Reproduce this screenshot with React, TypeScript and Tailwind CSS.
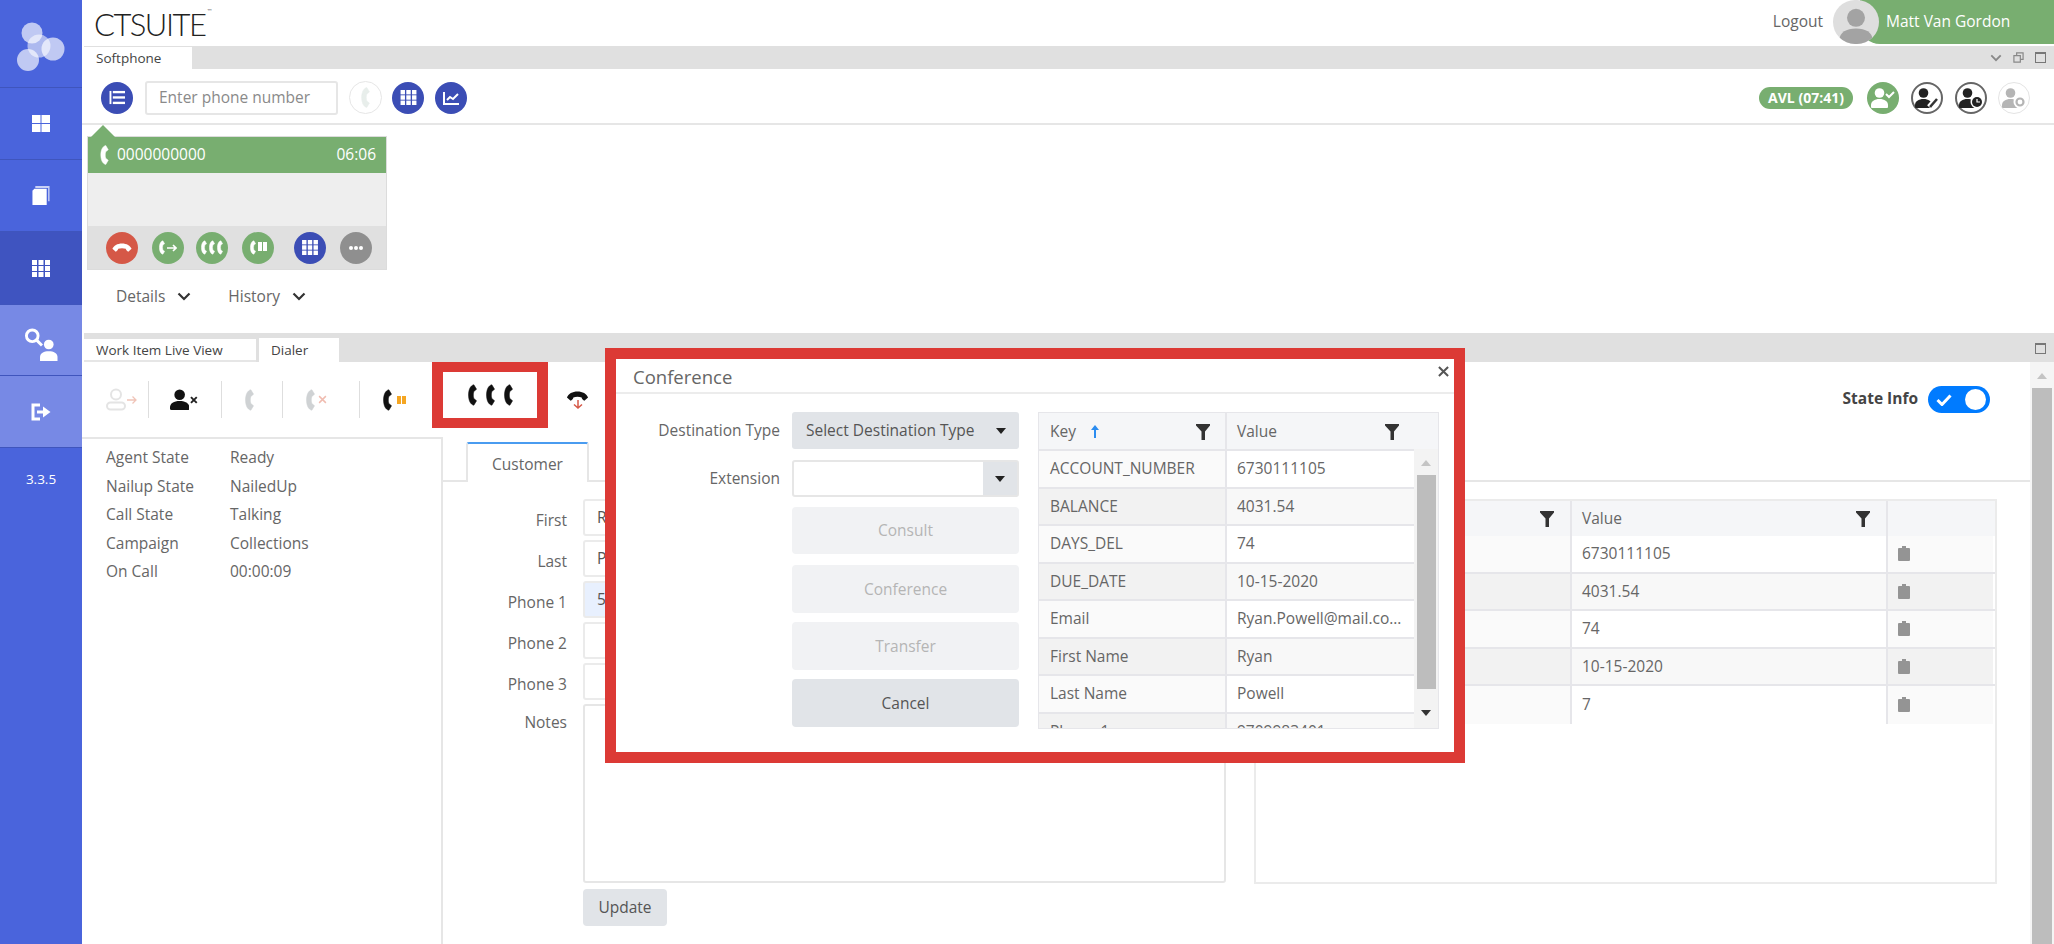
import type { ReactNode } from "react";

const Handset = ({ className = "" }: { className?: string }) => (
  <svg viewBox="0 0 10 24" className={className} fill="currentColor" stroke="currentColor" strokeWidth=".6" strokeLinejoin="round">
    <path d="M6.500.6l3 5-3 2.400c-.8 2.600-.8 5.400 0 8l3 2.400-3 5C2.500 22.500.6 17.500.6 12S2.500 1.500 6.500.6z" />
  </svg>
);

const Hangup = ({ className = "" }: { className?: string }) => (
  <svg viewBox="0 0 24 12" className={className} fill="currentColor">
    <path d="M.5 7C2 3 6.500.5 12 .5S22 3 23.500 7l-4 3.500c-1 0-3-2.500-3-3.500-2.500-1-6.500-1-9 0 0 1-2 3.500-3 3.500z" />
  </svg>
);

const UserGlyph = ({ className = "" }: { className?: string }) => (
  <svg viewBox="0 0 20 22" className={className} fill="currentColor">
    <circle cx="10" cy="6" r="5.500" />
    <path d="M1.500 22Q0 22 0 20.500V19c0-4 4-6.500 10-6.500S20 15 20 19v1.500q0 1.500-1.500 1.500z" />
  </svg>
);

const AgentIcon = ({ fill, children }: { fill: string; children: ReactNode }) => (
  <svg viewBox="0 0 24 20" className="h-[20px] w-[24px]" fill={fill}>
    <circle cx="8.500" cy="5" r="4.800" />
    <path d="M1 20Q0 20 0 19v-2c0-3.500 3.500-6 8.500-6s8.500 2.500 8.500 6v2q0 1-1 1z" />
    {children}
  </svg>
);

const Grid3 = ({ className = "" }: { className?: string }) => (
  <svg viewBox="0 0 18 17" className={className} fill="currentColor">
    {[0, 6, 12].map((y) =>
      [0, 6.500, 13].map((x) => <rect key={`${x}-${y}`} x={x} y={y} width="5" height="5" />)
    )}
  </svg>
);

const Funnel = () => (
  <svg viewBox="0 0 14 16" className="h-4 w-[14px] text-[#333]" fill="currentColor">
    <path d="M0 0h14v1.500L9 7.500V16H5.500V7.500L0 1.500z" />
  </svg>
);

const Arrow = ({ up = false, className = "" }: { up?: boolean; className?: string }) => (
  <svg viewBox="0 0 10 6" className={`h-[6px] w-[10px] ${className}`} fill="currentColor">
    <path d={up ? "M5 0l5 6H0z" : "M0 0h10L5 6z"} />
  </svg>
);

const Chevron = ({ className = "" }: { className?: string }) => (
  <svg viewBox="0 0 14 9" className={className} fill="none" stroke="currentColor" strokeWidth="2.200">
    <path d="M1.500 1.500L7 7l5.500-5.500" />
  </svg>
);

const Circle = ({ bg, children }: { bg: string; children: ReactNode }) => (
  <div className={`flex h-8 w-8 items-center justify-center rounded-full ${bg}`}>{children}</div>
);

const SideItem = ({ bg, h, children }: { bg: string; h: string; children: ReactNode }) => (
  <div className={`flex items-center justify-center border-b border-[#3f55bd] text-white ${bg} ${h}`}>{children}</div>
);

const Sep = ({ ml }: { ml: string }) => <div className={`h-[37px] w-px bg-[#dedede] ${ml}`} />;

const customerRows = [
  { label: "First", value: "Ryan", bg: "bg-white" },
  { label: "Last", value: "Powell", bg: "bg-white" },
  { label: "Phone 1", value: "55", bg: "bg-[#e8f0fe]" },
  { label: "Phone 2", value: "", bg: "bg-white" },
  { label: "Phone 3", value: "", bg: "bg-white" },
];

const attached = [
  ["ACCOUNT_NUMBER", "6730111105"],
  ["BALANCE", "4031.54"],
  ["DAYS_DEL", "74"],
  ["DUE_DATE", "10-15-2020"],
  ["Email", "Ryan.Powell@mail.com"],
  ["First Name", "Ryan"],
  ["Last Name", "Powell"],
  ["Phone 1", "9709983401"],
];

const callRows = [
  ["Agent State", "Ready"],
  ["Nailup State", "NailedUp"],
  ["Call State", "Talking"],
  ["Campaign", "Collections"],
  ["On Call", "00:00:09"],
];

function Sidebar() {
  return (
    <aside className="flex h-full w-[82px] shrink-0 flex-col bg-[#4a64dc]">
      <div className="flex h-[88px] items-center justify-center border-b border-[#3f55bd] pt-[6px]">
        <svg viewBox="0 0 50 50" className="h-[50px] w-[50px]" fill="#fff">
          <circle cx="16" cy="11" r="10.500" opacity=".65" />
          <circle cx="37" cy="27" r="11.500" opacity=".65" />
          <circle cx="12" cy="38" r="11" opacity=".65" />
          <circle cx="23" cy="24" r="11.500" opacity=".55" />
        </svg>
      </div>
      <SideItem bg="" h="h-[72px]">
        <svg viewBox="0 0 18 17" className="h-[17px] w-[18px]" fill="currentColor">
          <rect width="8.500" height="8" />
          <rect x="9.500" width="8.500" height="8" />
          <rect y="9" width="8.500" height="8" />
          <rect x="9.500" y="9" width="8.500" height="8" />
        </svg>
      </SideItem>
      <SideItem bg="" h="h-[72px]">
        <svg viewBox="0 0 20 20" className="h-[19px] w-[20px]" fill="currentColor">
          <path d="M3 3h13v17H1V5z" />
          <path d="M4 0h15v16h-1.500V2H4z" opacity=".7" />
        </svg>
      </SideItem>
      <SideItem bg="bg-[#3f54c0]" h="h-[73px]">
        <Grid3 className="h-[17px] w-[18px]" />
      </SideItem>
      <SideItem bg="bg-[#7789e5] pt-[8px]" h="h-[71px]">
        <svg viewBox="0 0 34 34" className="h-[33px] w-[34px]">
          <circle cx="8" cy="8" r="6" fill="none" stroke="#fff" strokeWidth="3" />
          <path d="M12 12l6 6" stroke="#fff" strokeWidth="3" />
          <circle cx="25" cy="17" r="5" fill="#fff" />
          <path d="M16 34v-4c0-4 4-6 9-6s9 2 9 6v4z" fill="#fff" />
        </svg>
      </SideItem>
      <SideItem bg="bg-[#7789e5]" h="h-[72px]">
        <svg viewBox="0 0 20 18" className="h-[18px] w-5" fill="none" stroke="#fff" strokeWidth="3">
          <path d="M9 2H2v14h7" />
          <path d="M6 9h7" />
          <path d="M12 3.500L19.500 9 12 14.500z" fill="#fff" stroke="none" />
        </svg>
      </SideItem>
      <div className="pt-[21px] text-center text-[13.500px] leading-5 text-white">3.3.5</div>
    </aside>
  );
}

function TopBar() {
  return (
    <header className="flex h-[46px] items-start bg-white">
      <div className="ml-[12px] flex items-start pt-[6px] [font-family:'Lato',sans-serif] text-[31px] leading-[36px] font-light tracking-[-1.500px] text-[#222]">
        CTSUITE
        <span className="ml-[2px] text-[6px] leading-[10px] tracking-normal">™</span>
      </div>
      <span className="ml-auto mt-[11px] text-[15.500px] leading-5 text-[#666]">Logout</span>
      <div className="relative z-10 ml-[10px] flex h-[44px] w-[46px] items-end justify-center overflow-hidden rounded-full bg-[#dedede] text-[#a3a3a3]">
        <UserGlyph className="h-[36px] w-[34px]" />
      </div>
      <div className="-ml-[19px] flex h-[44px] w-[194px] items-center rounded-bl-[20px] bg-[#78ae70] pl-[26px] text-[15.500px] text-white">
        Matt Van Gordon
      </div>
    </header>
  );
}

function Softphone() {
  return (
    <section className="flex h-[286px] flex-col">
      <div className="ml-[2px] flex h-[23px] items-end bg-[#e0e0e0] pr-[8px]">
        <div className="flex h-[22px] w-[108px] items-center bg-white pl-[12px] pt-[1px] text-[13.500px] text-[#444]">Softphone</div>
        <div className="ml-auto flex h-full items-center gap-[11px] text-[#888]">
          <Chevron className="h-[8px] w-[12px]" />
          <svg viewBox="0 0 12 12" className="h-[11px] w-[11px]" fill="none" stroke="currentColor" strokeWidth="1.300">
            <path d="M1 4h7v7H1zM4 4V1h7v7H8" />
          </svg>
          <div className="h-[11px] w-[11px] border border-t-2 border-[#777]" />
        </div>
      </div>
      <div className="flex h-[56px] items-center border-b-2 border-[#e6e6e6] pl-[19px] pr-[24px] pt-[3px]">
        <Circle bg="bg-[#3b4db5]">
          <svg viewBox="0 0 17 16" className="h-[15px] w-[17px]" fill="#fff">
            <rect y="1" width="2" height="14" />
            <rect x="3.500" y="1" width="13" height="2.500" />
            <rect x="3.500" y="6.700" width="13" height="2.500" />
            <rect x="3.500" y="12.500" width="13" height="2.500" />
          </svg>
        </Circle>
        <div className="ml-[12px] flex h-[34px] w-[193px] items-center rounded-[3px] border-2 border-[#e6e6e6] pl-[12px] text-[15.500px] text-[#8a8a8a]">
          Enter phone number
        </div>
        <div className="ml-[11px] flex h-[33px] w-[33px] items-center justify-center rounded-full border border-[#e6e6e6] text-[#e8eeeb]">
          <Handset className="h-[21px] w-[9px]" />
        </div>
        <div className="ml-[10px]">
          <Circle bg="bg-[#3b4db5]"><Grid3 className="h-[15px] w-[17px] text-white" /></Circle>
        </div>
        <div className="ml-[11px]">
          <Circle bg="bg-[#3b4db5]">
            <svg viewBox="0 0 17 14" className="h-[14px] w-[17px]" fill="none" stroke="#fff" strokeWidth="2">
              <path d="M1 1v12h15" />
              <path d="M4 9l3-3 3 2 5-5" />
            </svg>
          </Circle>
        </div>
        <div className="ml-auto flex h-[22px] w-[94px] items-center justify-center rounded-full bg-[#78ae70] text-[14px] font-bold text-white">
          AVL (07:41)
        </div>
        <div className="ml-[14px]">
          <Circle bg="bg-[#78ae70]">
            <AgentIcon fill="#fff">
              <path d="M15 6l3 3 5-5" fill="none" stroke="#fff" strokeWidth="2" />
            </AgentIcon>
          </Circle>
        </div>
        <div className="ml-[12px]">
          <Circle bg="border-2 border-[#666] bg-white">
            <AgentIcon fill="#222">
              <path d="M14 19l8-9" fill="none" stroke="#fff" strokeWidth="5" />
              <path d="M15 19l7-8" fill="none" stroke="#333" strokeWidth="2.500" />
            </AgentIcon>
          </Circle>
        </div>
        <div className="ml-[12px]">
          <Circle bg="border-2 border-[#666] bg-white">
            <AgentIcon fill="#222">
              <circle cx="18" cy="14" r="6.500" fill="#fff" />
              <circle cx="18" cy="14" r="5" fill="#222" />
              <path d="M18 11v3h3" fill="none" stroke="#fff" strokeWidth="1.200" />
            </AgentIcon>
          </Circle>
        </div>
        <div className="ml-[11px]">
          <Circle bg="border border-[#e4e4e4] bg-white">
            <AgentIcon fill="#b5b5b5">
              <circle cx="18" cy="14" r="6.500" fill="#fff" />
              <circle cx="18" cy="14" r="3.500" fill="none" stroke="#b5b5b5" strokeWidth="2.200" />
            </AgentIcon>
          </Circle>
        </div>
      </div>
      <CallCard />
      <div className="ml-[34px] mt-[16px] flex items-center text-[15.500px] leading-5 text-[#666]">
        <span>Details</span>
        <Chevron className="ml-[12px] h-[9px] w-[14px] text-[#333]" />
        <span className="ml-[37px]">History</span>
        <Chevron className="ml-[12px] h-[9px] w-[14px] text-[#333]" />
      </div>
    </section>
  );
}

function CallCard() {
  return (
    <div className="relative ml-[5px] mt-[11px] h-[134px] w-[300px] border border-[#dcdcdc]">
      <svg viewBox="0 0 26 13" className="absolute -top-[12px] left-[2px] h-[13px] w-[26px]" fill="#78ae70">
        <path d="M0 13L13 0l13 13z" />
      </svg>
      <div className="flex h-[36px] items-center bg-[#78ae70] pl-[12px] pr-[10px] text-[15.500px] text-white">
        <Handset className="h-[20px] w-[9px]" />
        <span className="ml-[8px]">0000000000</span>
        <span className="ml-auto">06:06</span>
      </div>
      <div className="h-[53px] bg-[#eeeeee]" />
      <div className="flex h-[43px] items-center bg-[#e0e0e0] pl-[18px]">
        <Circle bg="bg-[#d55847]"><Hangup className="h-[10px] w-[20px] text-white" /></Circle>
        <div className="ml-[14px]">
          <Circle bg="bg-[#78ae70]">
            <Handset className="h-[15px] w-[6px] text-white" />
            <svg viewBox="0 0 10 8" className="ml-[2px] h-[8px] w-[10px]" fill="none" stroke="#fff" strokeWidth="1.600">
              <path d="M0 4h9M6 1l3 3-3 3" />
            </svg>
          </Circle>
        </div>
        <div className="ml-[12px]">
          <Circle bg="bg-[#78ae70]">
            <div className="flex gap-[2px] text-white">
              <Handset className="h-[15px] w-[6px]" />
              <Handset className="h-[15px] w-[6px]" />
              <Handset className="h-[15px] w-[6px]" />
            </div>
          </Circle>
        </div>
        <div className="ml-[14px]">
          <Circle bg="bg-[#78ae70]">
            <Handset className="h-[15px] w-[6px] text-white" />
            <div className="ml-[2px] -mt-[2px] flex gap-px">
              <div className="h-[9px] w-[4px] bg-white" />
              <div className="h-[9px] w-[4px] bg-white" />
            </div>
          </Circle>
        </div>
        <div className="ml-[20px]">
          <Circle bg="bg-[#3b4db5]"><Grid3 className="h-[15px] w-[16px] text-white" /></Circle>
        </div>
        <div className="ml-[14px]">
          <Circle bg="bg-[#8f8f8f]">
            <div className="flex gap-px">
              <div className="h-1 w-1 rounded-full bg-white" />
              <div className="h-1 w-1 rounded-full bg-white" />
              <div className="h-1 w-1 rounded-full bg-white" />
            </div>
          </Circle>
        </div>
      </div>
    </div>
  );
}

function DialerToolbar() {
  return (
    <div className="flex h-[75px] items-center">
      <div className="ml-[24px] flex items-center">
        <svg viewBox="0 0 20 22" className="h-[23px] w-[20px]" fill="none" stroke="#e4e4e4" strokeWidth="2">
          <circle cx="10" cy="6" r="5" />
          <rect x="1" y="14" width="18" height="7" rx="3.500" />
        </svg>
        <svg viewBox="0 0 10 9" className="ml-px h-[10px] w-[10px]" fill="none" stroke="#f0c4b8" strokeWidth="1.300">
          <path d="M0 4.500h9M5.500 1L9 4.500 5.500 8" />
        </svg>
      </div>
      <Sep ml="ml-[11px]" />
      <div className="ml-[21px] flex w-[28px] items-center">
        <UserGlyph className="h-[23px] w-[20px] text-[#111]" />
        <svg viewBox="0 0 8 8" className="ml-px h-[8px] w-[8px]" stroke="#222" strokeWidth="2">
          <path d="M1 1l6 6M7 1L1 7" />
        </svg>
      </div>
      <Sep ml="ml-[23px]" />
      <Handset className="ml-[23px] h-[22px] w-[9px] text-[#cfd2d4]" />
      <Sep ml="ml-[28px]" />
      <div className="ml-[23px] flex items-center">
        <Handset className="h-[22px] w-[9px] text-[#cfd2d4]" />
        <svg viewBox="0 0 8 8" className="ml-[3px] h-[9px] w-[9px]" stroke="#f0bcb0" strokeWidth="1.300">
          <path d="M1 1l6 6M7 1L1 7" />
        </svg>
      </div>
      <Sep ml="ml-[32px]" />
      <div className="ml-[23px] flex items-center">
        <Handset className="h-[22px] w-[9px] text-[#111]" />
        <div className="ml-[5px] flex gap-px">
          <div className="h-[8px] w-[4px] bg-[#f5a623]" />
          <div className="h-[8px] w-[4px] bg-[#f5a623]" />
        </div>
      </div>
      <div className="ml-[26px] mb-[9px] flex h-[66px] w-[116px] items-center justify-center gap-[9px] border-x-[11px] border-y-[10px] border-[#dc3a35] bg-white text-[#111]">
        <Handset className="h-[22px] w-[9px]" />
        <Handset className="h-[22px] w-[9px]" />
        <Handset className="h-[22px] w-[9px]" />
      </div>
      <div className="ml-[18px] flex w-[23px] flex-col items-center">
        <Hangup className="h-[11px] w-[23px] text-[#111]" />
        <svg viewBox="0 0 10 9" className="-mt-[2px] h-[9px] w-[10px]" fill="none" stroke="#d55847" strokeWidth="1.500">
          <path d="M5 0v8M1 4.500L5 8l4-3.500" />
        </svg>
      </div>
      <span className="ml-auto mb-[2px] text-[15.500px] font-bold text-[#444]">State Info</span>
      <div className="ml-[10px] mr-[40px] flex h-[27px] w-[62px] items-center justify-between rounded-full bg-[#007bff] pl-[8px] pr-[4px]">
        <svg viewBox="0 0 16 12" className="h-[12px] w-[16px]" fill="none" stroke="#fff" strokeWidth="3">
          <path d="M1.500 6l4.500 4.500L14.500 1.500" />
        </svg>
        <div className="h-[21px] w-[21px] rounded-full bg-white" />
      </div>
    </div>
  );
}

function CustomerForm() {
  return (
    <div className="flex w-[783px] flex-col gap-[4px] pt-[17px]">
      {customerRows.map((r) => (
        <div key={r.label} className="flex h-[37px] items-center">
          <label className="w-[124px] pt-[7px] text-right text-[15.500px] text-[#666]">{r.label}</label>
          <div className={`ml-[16px] flex h-full w-[643px] items-center rounded-[3px] border-2 border-[#ebebeb] pl-[12px] text-[15.500px] text-[#555] ${r.bg}`}>
            {r.value}
          </div>
        </div>
      ))}
      <div className="flex">
        <label className="w-[124px] pt-[7px] text-right text-[15.500px] text-[#666]">Notes</label>
        <div className="ml-[16px] h-[179px] w-[643px] rounded-[3px] border-2 border-[#e6e6e6] bg-white" />
      </div>
      <button className="ml-[140px] mt-[2px] h-[37px] w-[84px] rounded-[4px] bg-[#e1e4e8] text-[15.500px] text-[#555]">Update</button>
    </div>
  );
}

function AttachedTable() {
  return (
    <div className="ml-[28px] mt-[17px] h-[385px] w-[743px] border-2 border-[#ebebeb]">
      <div className="grid h-[35px] grid-cols-[316px_316px_107px] bg-[#f5f6f8] text-[15.500px] text-[#666]">
        <div className="flex items-center justify-end border-r-2 border-[#e6e6ea] pr-[16px]"><Funnel /></div>
        <div className="flex items-center justify-between border-r-2 border-[#e6e6ea] pl-[10px] pr-[16px]">Value <Funnel /></div>
        <div />
      </div>
      {attached.slice(0, 5).map((r, i) => (
        <div
          key={r[0]}
          className={`grid h-[37.500px] grid-cols-[316px_316px_105px] text-[15.500px] text-[#666] ${i < 4 ? "border-b-2 border-[#e6e6ea]" : ""}`}
        >
          <div className={`border-r-2 border-[#e6e6ea] ${i % 2 ? "bg-[#f2f2f2]" : "bg-[#fafafa]"}`} />
          <div className={`flex items-center border-r-2 border-[#e6e6ea] pl-[10px] ${i % 2 ? "bg-[#f8f8f8]" : "bg-white"}`}>
            {i === 4 ? "7" : r[1]}
          </div>
          <div className={`flex items-center pl-[10px] ${i % 2 ? "bg-[#f2f2f2]" : "bg-[#fafafa]"}`}>
            <svg viewBox="0 0 12 15" className="h-[15px] w-[12px]" fill="#949494">
              <path d="M4 0h4v2h3a1 1 0 011 1v11a1 1 0 01-1 1H1a1 1 0 01-1-1V3a1 1 0 011-1h3z" />
            </svg>
          </div>
        </div>
      ))}
    </div>
  );
}

function ConferenceModal() {
  return (
    <div className="absolute left-[605px] top-[348px] h-[415px] w-[860px] border-[11px] border-[#dc3a35] bg-white">
      <div className="flex h-[35px] items-center justify-between border-b-2 border-[#ececec] pl-[17px] pr-[5px] pt-[2px]">
        <span className="text-[18.500px] text-[#666]">Conference</span>
        <svg viewBox="0 0 12 12" className="mb-[10px] h-[11px] w-[11px]" stroke="#555" strokeWidth="2.200">
          <path d="M1 1l10 10M11 1L1 11" />
        </svg>
      </div>
      <div className="flex pt-[18px]">
        <div className="grid w-[403px] grid-cols-[164px_227px] content-start gap-x-[12px] text-[15.500px]">
          <label className="flex h-[37px] items-center justify-end text-[#666]">Destination Type</label>
          <div className="flex h-[37px] items-center justify-between rounded-[3px] bg-[#e1e4e8] pl-[14px] pr-[13px] pt-[1px] text-[#555]">
            Select Destination Type
            <Arrow className="text-[#222]" />
          </div>
          <label className="mt-[11px] flex h-[37px] items-center justify-end text-[#666]">Extension</label>
          <div className="mt-[11px] flex h-[37px] justify-end rounded-[3px] border-2 border-[#e6e6e6] bg-white">
            <div className="flex w-[34px] items-center justify-center bg-[#e1e4e8]">
              <Arrow className="text-[#222]" />
            </div>
          </div>
          <button className="col-start-2 mt-[10px] h-[47px] rounded-[4px] bg-[#f1f2f4] pt-[1px] text-[#b5b5b5]">Consult</button>
          <button className="col-start-2 mt-[11px] h-[48px] rounded-[4px] bg-[#f1f2f4] pt-[1px] text-[#b5b5b5]">Conference</button>
          <button className="col-start-2 mt-[9px] h-[48px] rounded-[4px] bg-[#f1f2f4] pt-[2px] text-[#b5b5b5]">Transfer</button>
          <button className="col-start-2 mt-[9px] h-[48px] rounded-[4px] bg-[#e1e4e8] pt-[2px] text-[#555]">Cancel</button>
        </div>
        <ModalTable />
      </div>
    </div>
  );
}

function ModalTable() {
  return (
    <div className="ml-[19px] flex h-[317px] w-[401px] flex-col overflow-hidden border border-[#e6e6ea] text-[15.500px] text-[#666]">
      <div className="flex h-[36px] shrink-0 bg-[#f5f6f8]">
        <div className="flex w-[188px] items-center border-r-2 border-[#e6e6ea] pl-[11px] pr-[15px] pt-[1px]">
          Key
          <svg viewBox="0 0 8 13" className="ml-[15px] h-[13px] w-[8px]" fill="#2b8cf0">
            <path d="M4 0l4 5H5v8H3V5H0z" />
          </svg>
          <div className="ml-auto"><Funnel /></div>
        </div>
        <div className="flex w-[187px] items-center justify-between pl-[10px] pr-[15px] pt-[1px]">
          Value <Funnel />
        </div>
      </div>
      <div className="flex min-h-0 flex-1">
        <div className="w-[375px] overflow-hidden">
          {attached.map((r, i) => (
            <div key={r[0]} className="flex h-[37.500px] border-t-2 border-[#e6e6ea]">
              <div className={`flex w-[188px] items-center border-r-2 border-[#e6e6ea] pl-[11px] ${i % 2 ? "bg-[#f2f2f2]" : "bg-[#fafafa]"}`}>{r[0]}</div>
              <div className={`flex w-[187px] items-center pl-[10px] ${i % 2 ? "bg-[#f8f8f8]" : "bg-white"}`}>
                <span className="w-[166px] truncate">{r[1]}</span>
              </div>
            </div>
          ))}
        </div>
        <div className="flex w-[24px] flex-col items-center bg-[#f3f3f3]">
          <Arrow up className="mt-[11px] text-[#c4c4c4]" />
          <div className="mt-[9px] h-[214px] w-[19px] bg-[#bdbdbd]" />
          <Arrow className="mt-[21px] text-[#333]" />
        </div>
      </div>
    </div>
  );
}

export default function App() {
  return (
    <div className="relative flex h-[944px] w-[2054px] overflow-hidden bg-white [font-family:'Open_Sans',sans-serif]">
      <Sidebar />
      <main className="flex min-w-0 flex-1 flex-col">
        <TopBar />
        <Softphone />
        <div className="mt-[1px] ml-[2px] flex h-[29px] items-end bg-[#e0e0e0] pr-[8px]">
          <div className="flex h-[23px] w-[172px] items-center border-b-2 border-[#e6e6e6] bg-white pl-[12px] pt-[1px] text-[13.500px] text-[#444]">Work Item Live View</div>
          <div className="ml-[3px] flex h-[24px] w-[80px] items-center bg-white pl-[12px] pt-[1px] text-[13.500px] text-[#444]">Dialer</div>
          <div className="mb-[8px] ml-auto h-[11px] w-[11px] border border-t-2 border-[#777]" />
        </div>
        <div className="flex min-h-0 flex-1">
          <div className="flex min-w-0 flex-1 flex-col">
            <DialerToolbar />
            <div className="flex min-h-0 flex-1">
              <div className="w-[361px] border-r-2 border-t-2 border-[#e6e6e6] pl-[24px] pt-[4px] text-[15.500px] leading-[28.500px] text-[#666]">
                {callRows.map((r) => (
                  <div key={r[0]} className="flex">
                    <span className="w-[124px]">{r[0]}</span>
                    <span>{r[1]}</span>
                  </div>
                ))}
              </div>
              <div className="flex min-w-0 flex-1 flex-col">
                <div className="flex h-[45px] items-end border-b-2 border-[#e6e6e6] pl-[23px]">
                  <div className="-mb-[2px] flex h-[40px] w-[123px] items-center justify-center rounded-t-[3px] border-x-2 border-t-2 border-x-[#e6e6e6] border-t-[#4a9cf0] bg-white pt-[3px] text-[15.500px] text-[#666]">
                    Customer
                  </div>
                </div>
                <div className="flex">
                  <CustomerForm />
                  <AttachedTable />
                </div>
              </div>
            </div>
          </div>
          <div className="flex w-[24px] flex-col items-center bg-[#f5f5f5]">
            <Arrow up className="mt-[11px] text-[#c4c4c4]" />
            <div className="mt-[9px] w-[20px] flex-1 bg-[#bdbdbd]" />
          </div>
        </div>
      </main>
      <ConferenceModal />
    </div>
  );
}
